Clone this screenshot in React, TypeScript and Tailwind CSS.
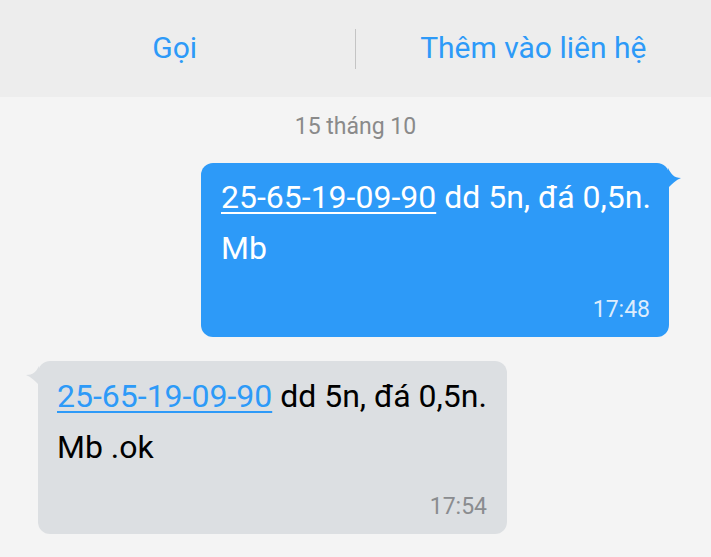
export default function App() {
  return (
    <div className="w-[711px] h-[557px] overflow-hidden bg-[#f4f4f4] font-['Roboto',sans-serif]">
      {/* thanh hành động trên cùng */}
      <div className="h-[97px] bg-[#ededed] flex items-center">
        <div className="flex-1 flex justify-center text-[30px] text-[#2d9af8] pb-[3px]">
          <span className="mr-[6px]">Gọi</span>
        </div>
        <div className="w-px h-[40px] bg-[#c4c4c4] -ml-[1px]" />
        <div className="flex-1 flex justify-center text-[30px] text-[#2d9af8] pb-[3px]">Thêm vào liên hệ</div>
      </div>

      <div className="text-center text-[23px] leading-[28px] text-[#8a8a8a] mt-[16px]">15 tháng 10</div>

      {/* tin nhắn đã gửi */}
      <div className="flex justify-end pr-[42px] mt-[22px]">
        <div className="relative w-[468px] h-[174px] rounded-[12px] bg-[#2d9af8] pl-[20px] pr-[19px] pt-[9px] flex flex-col">
          <svg className="absolute left-full -ml-[1px] top-0" width="14" height="26" viewBox="0 0 14 26">
            <path d="M0,5 C3,11 6,15 13,15 C8,17 4,21 0,25 Z" fill="#2d9af8" />
          </svg>
          <div className="text-[32px] leading-[51px] text-white whitespace-nowrap">
            <span className="underline decoration-[1.5px] underline-offset-[4px]">25-65-19-09-90</span> dd 5n, đá 0,5n.
          </div>
          <div className="text-[32px] leading-[51px] text-white">Mb</div>
          <div className="mt-auto mb-[13px] text-right text-[23px] leading-[28px] text-[#dcecfd]">17:48</div>
        </div>
      </div>

      {/* tin nhắn nhận được */}
      <div className="flex justify-start pl-[38px] mt-[24px]">
        <div className="relative w-[469px] h-[173px] rounded-[12px] bg-[#dcdfe2] pl-[19px] pr-[20px] pt-[10px] flex flex-col">
          <svg className="absolute right-full -mr-[1px] top-0" width="14" height="26" viewBox="0 0 14 26">
            <path d="M14,5 C11,11 8,14 1,14 C6,16 10,20 14,24 Z" fill="#dcdfe2" />
          </svg>
          <div className="text-[32px] leading-[51px] text-black whitespace-nowrap">
            <span className="text-[#2d9af8] underline decoration-[1.5px] underline-offset-[4px]">25-65-19-09-90</span> dd 5n, đá 0,5n.
          </div>
          <div className="text-[32px] leading-[51px] text-black">Mb .ok</div>
          <div className="mt-auto mb-[13px] text-right text-[23px] leading-[28px] text-[#8a8c8f]">17:54</div>
        </div>
      </div>
    </div>
  );
}
